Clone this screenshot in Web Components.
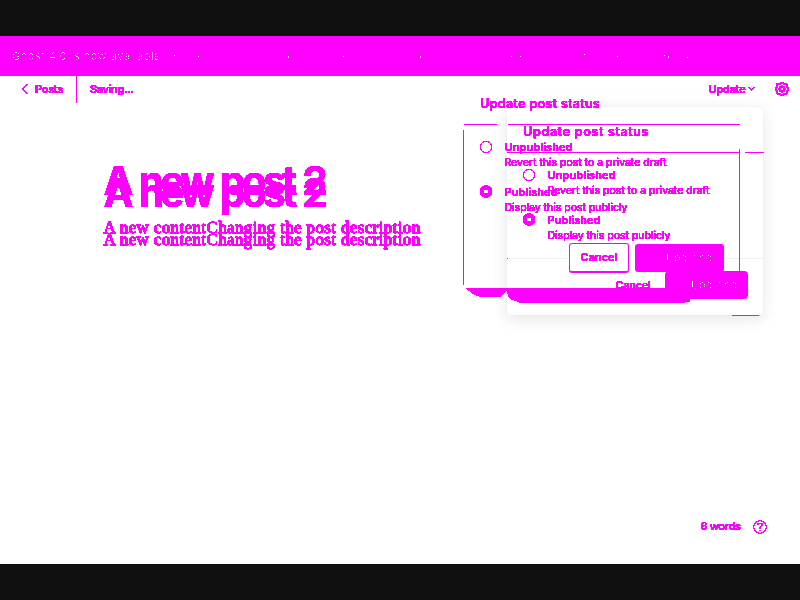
<!DOCTYPE html>
<html lang="en"><head><meta charset="utf-8"><title>Ghost editor visual diff</title>
<style>html,body{margin:0;background:#0f0f0f;overflow:hidden}body{font-family:Inter,sans-serif}</style></head>
<body><diff-page></diff-page>
<script>
const INK='#f0f';
/* One line of hard-edged text: size, w (advance width), weight, and cut (edge threshold). */
class InkText extends HTMLElement{
 connectedCallback(){
  if(this.shadowRoot)return;
  const cut=+(this.getAttribute('cut')||.04), slope=30;
  const s=this.attachShadow({mode:'open'});
  s.innerHTML=`<style>:host{display:block;line-height:1;width:max-content}span{display:block;width:max-content;white-space:pre;filter:url(#edge)}svg{position:absolute;width:0;height:0}</style><svg><filter id="edge" x="-5%" y="-30%" width="110%" height="160%" color-interpolation-filters="sRGB"><feComponentTransfer><feFuncA type="linear" slope="${slope}" intercept="${-slope*cut}"/></feComponentTransfer></filter></svg><span><slot></slot></span>`;
  const sp=s.querySelector('span');
  sp.style.fontSize=(this.getAttribute('size')||11)+'px';
  sp.style.fontWeight=this.getAttribute('weight')||400;
  const w=+this.getAttribute('w');
  if(w){const r=sp.getBoundingClientRect().width;sp.style.letterSpacing=((w-r)/this.textContent.length)+'px';}
 }
}
const define=(tag,html,base='')=>customElements.define(tag,class extends HTMLElement{
 connectedCallback(){ if(this.shadowRoot)return; this.attachShadow({mode:'open'}).innerHTML=`<style>:host{display:block;box-sizing:border-box}${base}</style>${html}`; }
});

const specks=[[155,59,2,1],[157,56,1,1],[174,55,1,1],[198,56,1,1],[288,56,1,2],[420,56,1,2],[511,56,1,1],[520,56,1,1],[584,54,1,1],[617,56,1,1],[664,55,1,1],[668,56,1,2],[687,57,1,1],[343,56,1,1]]
 .map(a=>`<rect x="${a[0]}" y="${a[1]-36}" width="${a[2]}" height="${a[3]}"/>`).join('');
define('notice-bar',`<ink-text size="11" w="149" cut=".82" weight="400">Ghost 4.0 is now available</ink-text><svg width="800" height="40" fill="#fff" shape-rendering="crispEdges">${specks}</svg>`,
 `:host{height:40px;background:${INK};color:#fff;display:flex;align-items:center;padding-left:12px;position:relative}svg{position:absolute;left:0;top:0}`);

define('editor-bar',`<svg class="back" width="8" height="12" viewBox="0 0 8 12"><path d="M6.5 1L1.5 6l5 5" shape-rendering="crispEdges"/></svg>
 <ink-text size="11" weight="500" w="28">Posts</ink-text><i></i><ink-text size="11" weight="500" w="43">Saving...</ink-text>
 <b></b><ink-text size="11" weight="500" w="37">Update</ink-text><svg class="down" width="9" height="6" viewBox="0 0 9 6"><path d="M1.5 1l3 3 3-3" stroke-width="2" shape-rendering="crispEdges"/></svg>
 <svg class="gear" width="16" height="16" viewBox="0 0 16 16"><g shape-rendering="crispEdges"><path d="M6.4 2.6L7.2 1.6h1.6l.8 1 .5.6 2.2-.6 1 1.1-.4 2 1.3 1v2.2l-1.3 1 .4 2-1 1.2-2.2-.5-.6 1-.8.8H7.2l-.8-.8-.6-1-2.1.5-1.1-1.2.5-2-1.3-1V6.7l1.3-1-.5-2 1.1-1.1 2.1.6z" stroke-width="1.9"/><circle cx="8" cy="8" r="2.6" stroke-width="2"/></g></svg>`,
 `:host{height:27px;display:flex;align-items:center;padding:0 10.5px 0 21px;color:${INK}}svg{fill:none;stroke:${INK};stroke-width:1.3;margin-bottom:1px}.back{margin-right:6px}i{width:1px;height:27px;background:${INK};margin:0 13px 0 13px}b{flex:1}.down{margin-left:1px}.gear{margin-left:18px}`);

define('post-copy',`<ink-text class="t a" size="40" weight="700" w="221">A new post 2</ink-text><ink-text class="t b" size="40" weight="700" w="221">A new post 2</ink-text>
 <ink-text class="s c" size="17" w="317" cut=".02">A new contentChanging the post description</ink-text><ink-text class="s d" size="17" w="317" cut=".02">A new contentChanging the post description</ink-text>`,
 `:host{position:absolute;left:103.5px;top:120px;width:320px;height:100px;color:${INK}}ink-text{position:absolute;left:0}.t{word-spacing:2.5px}.a{top:4.5px}.b{top:16.5px}.s{font-family:"Liberation Serif",serif;-webkit-text-stroke:.3px ${INK}}.c{top:63px}.d{top:75px}`);

define('status-options',`<ink-text class="h" size="12.7" weight="500">Update post status</ink-text>
 <svg width="14" height="60" viewBox="0 0 14 60" fill="none" stroke="${INK}" shape-rendering="crispEdges"><circle cx="7" cy="7" r="5.7" stroke-width="1.2"/><circle cx="7" cy="51.5" r="4.2" stroke-width="4.4"/></svg>
 <div class="rows"><div><ink-text size="11" weight="500" w="68">Unpublished</ink-text><ink-text size="10.5" w="162">Revert this post to a private draft</ink-text></div>
 <div><ink-text size="11" weight="500" w="53">Published</ink-text><ink-text size="10.5" w="123">Display this post publicly</ink-text></div></div>`,
 `:host{display:grid;grid-template-columns:14px 1fr;column-gap:11px;grid-template-rows:42px auto;width:200px;color:${INK}}.h{grid-column:1/3;padding-left:1px}.rows{display:grid;gap:18px;padding-top:2px;padding-left:.5px;align-content:start}.rows div{display:grid;gap:5px}`);

define('status-diff',`<section class="card"></section>
 <svg class="lines" width="320" height="230" viewBox="455 95 320 230" shape-rendering="crispEdges">
 <path fill="#edf1f1" d="M508 258h60v1h-60zM725 258h38v1h-38z"/>
 <g fill="${INK}"><path d="M464 124h33v1h-33zM508 124h232v1H508zM463 130h1v155h-1zM507 152h232v1H507zM745 152h19v1h-19zM739 149h1v122h-1zM732 315h27v1h-27zM507 258h1v1h-1z"/>
 <path d="M465 288h225v14h-172l-6-2-4-3-1-7-2 2-4 5h-21l-7-3-4-3z"/><path d="M689 299h-4v4h-166v-3h170z"/></g></svg>
 <status-options class="old"></status-options><status-options class="new"></status-options>
 <div class="btn cancel"><ink-text size="11" weight="500" w="37">Cancel</ink-text></div>
 <div class="btn one"><ink-text size="11" weight="400" cut=".93" w="46">Updating</ink-text></div>
 <ink-text class="cancel2" size="11" weight="500" w="35">Cancel</ink-text>
 <div class="btn two"><ink-text size="11" weight="400" cut=".93" w="46">Updating</ink-text></div>`,
 `:host{position:absolute;left:455px;top:59px;width:320px;height:230px;color:${INK}}
 .card{position:absolute;left:52px;top:12px;width:256px;height:208px;border-radius:3px;background:#fff;box-shadow:0 0 1px #0002,0 5px 14px #5365701f,0 0 22px #00000008}
 .lines{position:absolute;left:0;top:0}.old,.new{position:absolute}.old{left:24px;top:3px}.new{left:67px;top:31px}
 .btn{position:absolute;box-sizing:border-box;display:flex;align-items:center;justify-content:center;border-radius:3px}
 .cancel{left:114px;top:148px;width:60px;height:30px;border:1px solid ${INK};border-bottom-width:2px}
 .one,.two{background:${INK};color:#fff;justify-content:flex-end}.one{left:180px;top:149px;width:89px;height:28px;padding-right:12px}.two{left:210px;top:176px;width:83px;height:28px;padding-right:11px;border-radius:4px}
 .cancel2{position:absolute;left:160.5px;top:185px}`);

define('word-count',`<ink-text size="11" weight="500" w="40">6 words</ink-text><svg width="16" height="16" viewBox="0 0 16 16" fill="none" stroke="${INK}" shape-rendering="crispEdges"><circle cx="8" cy="8" r="6.3" stroke-width="1.3"/><path d="M5.7 6Q5.8 4.3 8 4.3T10.3 6Q10.3 7.2 8 8.4v1.2M8 11v1.3" stroke-width="1.6"/></svg>`,
 `:host{position:absolute;right:32px;bottom:29.5px;display:flex;align-items:center;gap:11.5px;color:${INK}}`);

define('diff-page',`<main><notice-bar></notice-bar><editor-bar></editor-bar><post-copy></post-copy><status-diff></status-diff><word-count></word-count></main>`,
 `:host{height:600px;padding:36px 0;background:#0f0f0f}main{position:relative;height:528px;background:#fff;overflow:hidden}`);
customElements.define('ink-text',InkText);
document.querySelector('diff-page').shadowRoot.querySelectorAll('status-diff').forEach(d=>{
 d.shadowRoot.querySelectorAll('status-options').forEach((o,i)=>{
  const h=o.shadowRoot.querySelector('.h'),s=h.shadowRoot.querySelector('span');
  s.style.letterSpacing='0';s.style.letterSpacing=((i?126:120)-s.getBoundingClientRect().width)/18+'px';
 });
});
</script></body></html>
